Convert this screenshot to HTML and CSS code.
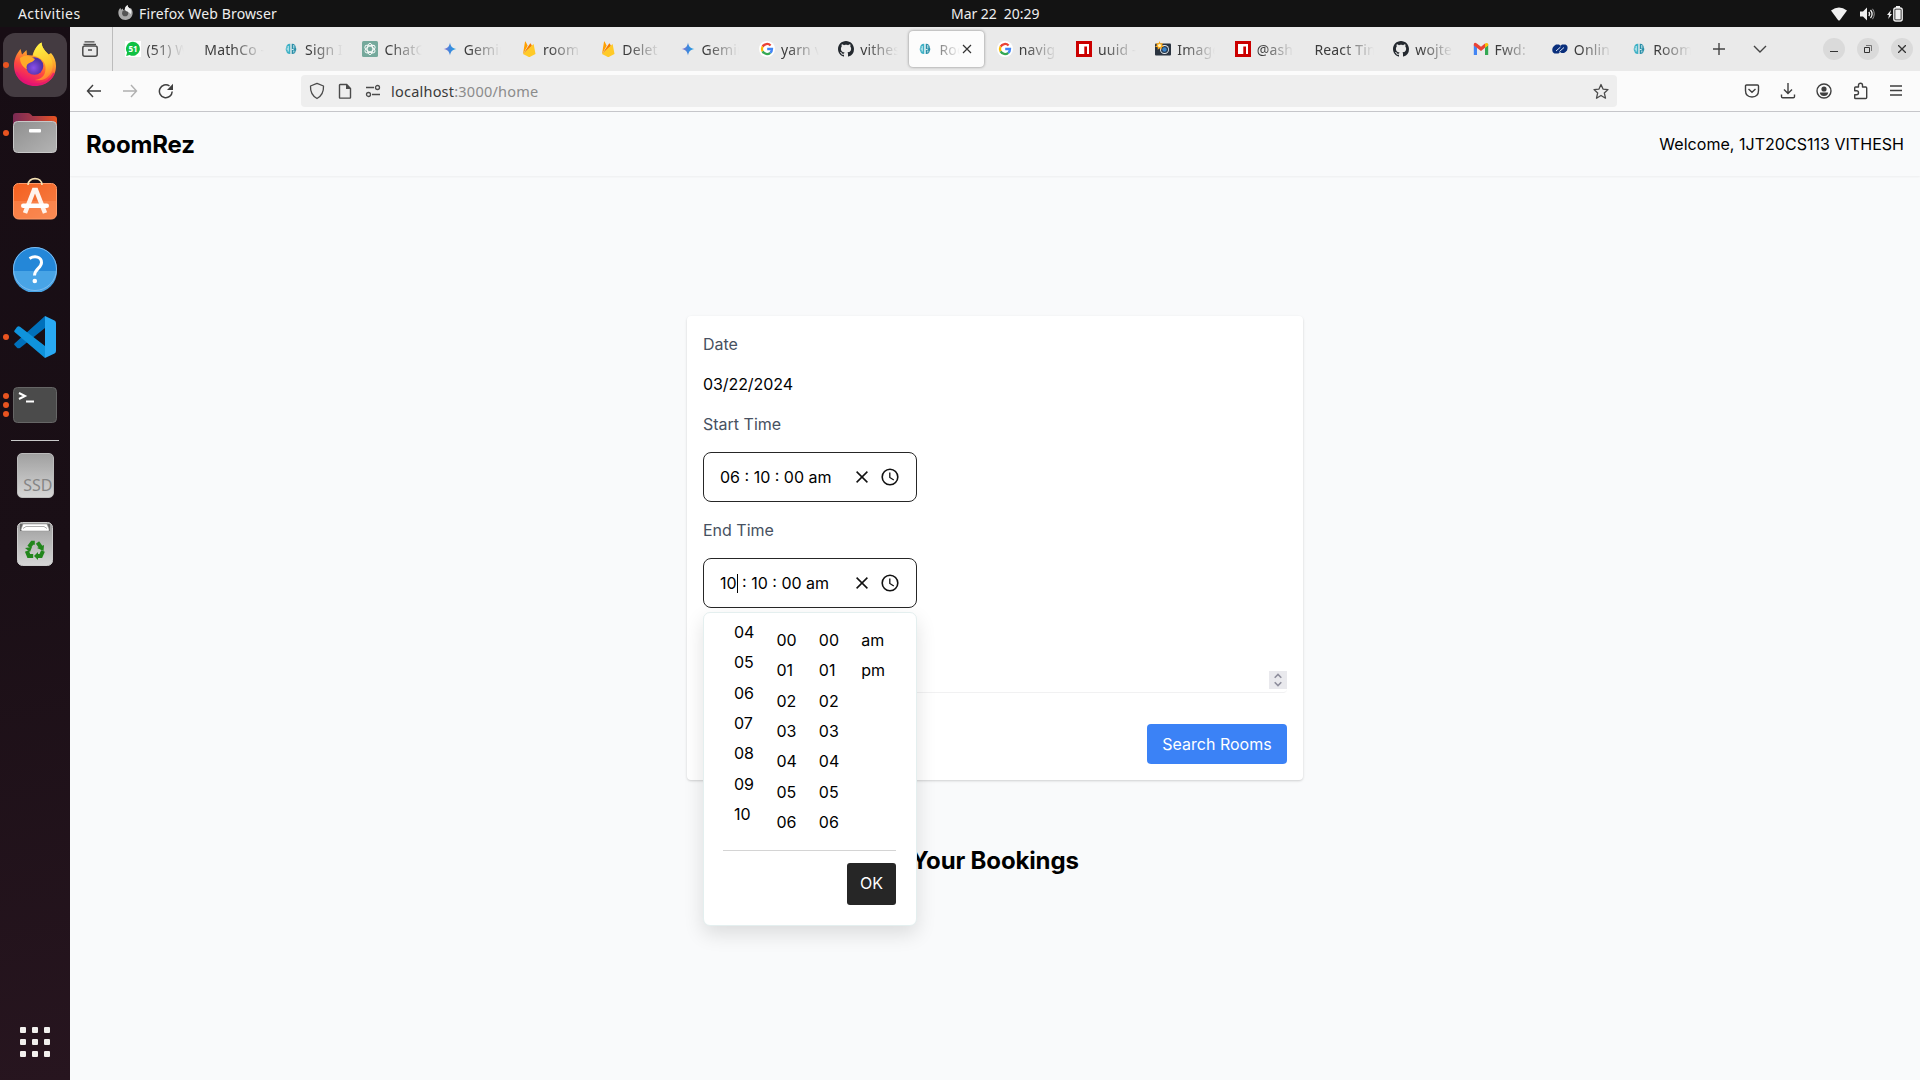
FILE: index.html
```html
<!DOCTYPE html>
<html lang="en">
<head>
<meta charset="utf-8">
<title>RoomRez</title>
<link rel="stylesheet" href="styles.css">
</head>
<body>
<svg class="defs" width="0" height="0">
  <defs>
    <linearGradient id="ffBody" x1=".8" y1="0" x2=".35" y2="1"><stop offset="0" stop-color="#fff24a"/><stop offset=".35" stop-color="#ffa72b"/><stop offset=".65" stop-color="#ff4a3e"/><stop offset="1" stop-color="#e3087c"/></linearGradient>
    <linearGradient id="ffTail" x1=".4" y1="0" x2=".6" y2="1"><stop offset="0" stop-color="#fff546"/><stop offset=".6" stop-color="#ffc42e"/><stop offset="1" stop-color="#ff7a30"/></linearGradient>
    <radialGradient id="ffGlobe" cx=".45" cy=".6"><stop offset="0" stop-color="#8a50ea"/><stop offset="1" stop-color="#5232a8"/></radialGradient>
    <linearGradient id="folderBack"><stop offset="0" stop-color="#7a2a53"/><stop offset=".5" stop-color="#a83a48"/><stop offset="1" stop-color="#e95420"/></linearGradient>
    <linearGradient id="greyDown" x1="0" y1="0" x2="0" y2="1"><stop offset="0" stop-color="#9e9e9e"/><stop offset="1" stop-color="#d6d6d6"/></linearGradient>
    <linearGradient id="folderFront" x1="0" y1="0" x2="1" y2="1"><stop offset="0" stop-color="#8f8f8f"/><stop offset="1" stop-color="#b4b4b4"/></linearGradient>
    <linearGradient id="gem"><stop offset="0" stop-color="#9b72cb"/><stop offset=".45" stop-color="#4285dc"/><stop offset="1" stop-color="#1ba1e3"/></linearGradient>
    <symbol id="gemini" viewBox="0 0 16 16"><path fill="url(#gem)" d="M8 1.500C8.600 5.500 10.500 7.400 14.500 8C10.500 8.600 8.600 10.500 8 14.500C7.400 10.500 5.500 8.600 1.500 8C5.500 7.400 7.400 5.500 8 1.500z"/></symbol>
    <symbol id="firebase" viewBox="0 0 16 16"><path fill="#ffa000" d="M2 13L4 .8c.1-.5.5-.5.7-.1l2 4z"/><path fill="#f57c00" d="M2 13L9 2.800c.3-.5.7-.5.9 0L11 5z"/><path fill="#ffca28" d="M2 13L12 3.500c.4-.3.700-.2.800.3L14.500 13l-5.300 2.800c-.6.300-1.200.300-1.800 0z"/></symbol>
    <symbol id="google" viewBox="0 0 16 16"><circle cx="8" cy="8" r="8" fill="#fff"/><g fill="none" stroke-width="2.300"><path stroke="#ea4335" d="M3.600 5.600A5 5 0 0 1 11.600 4.500"/><path stroke="#fbbc05" d="M3.600 5.600a5 5 0 0 0 0 4.800"/><path stroke="#34a853" d="M3.600 10.400A5 5 0 0 0 11.300 11.800"/><path stroke="#4285f4" d="M11.300 11.800A4.900 4.900 0 0 0 13 8H8.200"/></g></symbol>
    <symbol id="github" viewBox="0 0 16 16"><path fill="#24292f" d="M8 0C3.580 0 0 3.580 0 8c0 3.540 2.290 6.530 5.470 7.590.4.070.55-.17.55-.38 0-.19-.01-.82-.01-1.490-2.010.37-2.530-.49-2.690-.94-.09-.23-.48-.94-.82-1.130-.28-.15-.68-.52-.01-.53.63-.01 1.080.58 1.230.82.72 1.210 1.870.87 2.330.66.07-.52.28-.87.51-1.070-1.780-.2-3.640-.89-3.640-3.950 0-.87.31-1.590.82-2.150-.08-.2-.36-1.020.08-2.120 0 0 .67-.21 2.200.82.64-.18 1.320-.27 2-.27s1.360.09 2 .27c1.530-1.040 2.200-.82 2.200-.82.44 1.100.16 1.920.08 2.120.51.56.82 1.270.82 2.150 0 3.070-1.870 3.750-3.650 3.950.29.25.54.73.54 1.480 0 1.070-.01 1.930-.01 2.200 0 .21.15.46.55.38A8.010 8.010 0 0 0 16 8c0-4.420-3.580-8-8-8z"/></symbol>
    <symbol id="npm" viewBox="0 0 16 16"><path fill="#cb0000" d="M0 0h16v16H0z"/><path fill="#fff" d="M3 3h10v10h-2V5.500H8.300V13H3z"/></symbol>
    <symbol id="brain" viewBox="0 0 16 16"><path fill="#3fb1c5" d="M7.300 2.700C4.500 2.500 3 4.500 3.300 6.500c-.8 1-.8 2.500 0 3.500C3.500 12 5 13.300 7.300 13z"/><path fill="#2b8fa8" d="M8.700 2.700c2.800-.2 4.300 1.800 4 3.800.8 1 .8 2.500 0 3.500-.2 2-1.700 3.300-4 3z"/><path fill="none" stroke="#e2f5f8" stroke-width=".9" d="M5.200 5v5.500M3.500 8h1.700M10.800 4v3.500M10.800 9.500v2M8.700 8.500h2"/></symbol>
  </defs>
</svg>

<div class="topbar">
  <span class="activities">Activities</span>
  <svg class="app-icon" width="15" height="15" viewBox="0 0 44 44"><path fill="#aaa" d="M22 44C9 44 1 34 1 22c0-6 3-11 6-14l2 6 5-4 1 5 5-1c0-6 3-11 8-14 0 5 4 8 8 11l1-3c4 5 6 9 6 15 0 12-8 21-21 21z"/><circle cx="21" cy="24" r="9" fill="#555"/><path fill="#eee" d="M28 0c0 5 4 8 8 11 4 5 4 11 1 16-5-8-15-8-17-13 0-6 3-11 8-14z"/></svg>
  <span class="app-name">Firefox Web Browser</span>
  <span class="clock">Mar 22&nbsp; 20:29</span>
  <div class="status">
    <svg width="16" height="16" viewBox="0 0 16 16"><path fill="#f0f0f0" d="M0 4.500Q8-1.500 16 4.500L9 14q-1 1-2 0z"/></svg>
    <svg width="16" height="16" viewBox="0 0 16 16"><path fill="#f0f0f0" d="M1 5.500h3L8 1.500v13l-4-4H1z"/><path fill="none" stroke="#f0f0f0" stroke-width="1.300" d="M9.800 6q1.600 2 0 4M11.500 4q3.200 4 0 8"/><path fill="none" stroke="#999" d="M13.500 2.800q3.500 5 0 10.400"/></svg>
    <svg width="16" height="16" viewBox="0 0 16 16"><path fill="#f0f0f0" d="M4 4L0 9h2l-.8 4L5 8H3z"/><rect x="6.800" y="2" width="8.400" height="13" rx="2" fill="none" stroke="#f0f0f0" stroke-width="1.400"/><path fill="#f0f0f0" d="M9 0h4v2H9zM8.300 3.500h5.400v10H8.300z"/></svg>
  </div>
</div>

<div class="desktop">
  <aside class="dock">
    <div class="tile active"><span class="dots"><i></i></span>
      <svg width="44" height="46" viewBox="0 0 44 46"><path fill="url(#ffBody)" d="M22 45C9.500 45 1 35.500 1 24.500c0-7 3-12 6.500-16.500l1.500 5.500 4.500-4.500.500 5 5.500.500C21 9 24 4 28.500 1.500 29 7 32 10 35.500 13.500L38 12c3.500 4 5 8 5 13 0 11.500-9 20-21 20z"/><path fill="url(#ffTail)" d="M28.500 1.500C29 7 32 9.500 35.500 13.500c5 6 6 14 1 20.500-4 5-10 6-14.500 5 8-1 11-6 10.500-13-.500-6-5-9.500-12.500-11.500C21.500 8.500 24 4 28.500 1.500z"/><circle cx="21.500" cy="25" r="8.800" fill="url(#ffGlobe)"/><path fill="#ffab28" d="M7 17c5-3.500 9-2 12-.500l3 1.500c-1 2.500-4 3-6.500 4.500-2 1-2.500 4-1.500 6-5-3-7-7-7-11.500z"/><path fill="none" stroke="#e01770" stroke-width="2" opacity=".75" d="M3 31c4 8 11 12.500 19.500 12.500S38 39 41 32"/></svg>
    </div>
    <div class="tile"><span class="dots"><i></i></span>
      <svg width="46" height="42" viewBox="0 0 46 42"><path fill="url(#folderBack)" d="M1 12V4q0-3 3-3h12q2 0 3 1.500L20.500 4H42q3 0 3 3v8H1z"/><rect x="1.500" y="9.500" width="43" height="31" rx="4" fill="url(#folderFront)" stroke="#c8c8c8"/><rect x="17" y="17" width="12" height="3.500" rx="1" fill="#fff"/></svg>
    </div>
    <div class="tile store">
      <svg width="46" height="46" viewBox="0 0 46 46"><defs><linearGradient id="bag" x1="0" y1="0" x2="1" y2="1"><stop offset="0" stop-color="#f5601f"/><stop offset="1" stop-color="#f58048"/></linearGradient></defs><rect x="1.500" y="8.500" width="43" height="35.500" rx="5" fill="url(#bag)" stroke="#ff9a68"/><path fill="#ff9a66" opacity=".4" d="M2 26h42v14q0 4-4 4H6q-4 0-4-4z"/><path fill="none" stroke="#f6e2b4" stroke-width="1.700" d="M16 10c0-8.500 14-8.500 14 0"/><path fill="none" stroke="#fff3ec" stroke-width="4.500" d="M13 38L22 15h2l9 23"/><rect x="9" y="28.500" width="28" height="4.500" rx="2.200" fill="#fff"/></svg>
    </div>
    <div class="tile help">
      <svg width="46" height="46" viewBox="0 0 46 46"><circle cx="23" cy="23" r="22" fill="#2487d8"/><path fill="#48a4e6" d="M1 25h44a22 22 0 0 1-44 0z"/><circle cx="23" cy="23" r="21.500" fill="none" stroke="#7dbcf0"/><path fill="none" stroke="#fff" stroke-width="3" d="M17.500 12.500c5-3 12-2 12 4 0 5.500-7 6.500-7 13"/><circle cx="22.800" cy="35" r="2.300" fill="#fff"/></svg>
    </div>
    <div class="tile"><span class="dots"><i></i></span>
      <svg width="44" height="44" viewBox="0 0 44 44"><path fill="#0070bb" d="M1.500 28.500L32 1v12L7 33q-2 .800-3-.300L1.500 30q-.800-.800 0-1.500z"/><path fill="#0f93dc" d="M1.500 15.500L4 12q1.500-1.400 3-.300L32 31v12L1.500 17q-.700-.800 0-1.500z"/><path fill="#29a9f3" d="M32 1l9.500 4.500q1.500.700 1.500 2.500v28q0 1.800-1.500 2.500L32 43z"/></svg>
    </div>
    <div class="tile"><span class="dots"><i></i><i></i><i></i></span>
      <svg width="46" height="38" viewBox="0 0 46 38"><rect x="1.500" y="1.500" width="43" height="35" rx="4" fill="#4b4b4b" stroke="#666"/><path fill="none" stroke="#fff" stroke-width="2" d="M7 7l6 3-6 3M14 15.500h8"/></svg>
    </div>
    <div class="sep"></div>
    <div class="tile"><div class="ssd">SSD</div></div>
    <div class="tile">
      <svg width="38" height="46" viewBox="0 0 38 46"><rect x="1.500" y="1.500" width="35" height="43" rx="5" fill="url(#greyDown)" stroke="#ccc"/><path fill="#666" d="M4 3h30v7H4z"/><path fill="#fff" stroke="#999" stroke-width=".600" d="M5 8.500L7 3h24l2 5v2H6z"/><path stroke="#888" stroke-width=".700" fill="none" d="M7 7.500l3-2h18l3 2"/><g fill="none" stroke="#22861c" stroke-width="4"><path d="M13 26l3.200-4.300h2.600"/><path d="M21.500 21.500l3.700 5.200"/><path d="M27 30l-2.200 5h-4.300"/><path d="M17.200 35h-4.400l-2-5"/></g><path fill="#22861c" d="M22 31v8l-4-4zM9 27l7-1-2 5zM21 27l7-3-.500 6z"/></svg>
    </div>
    <div class="apps"><i></i><i></i><i></i><i></i><i></i><i></i><i></i><i></i><i></i></div>
  </aside>

  <section class="browser">
    <div class="tabs">
      <div class="recent"><svg width="18" height="18" viewBox="0 0 18 18" fill="none" stroke="#4b4b4b" stroke-width="1.500"><path d="M3.500 1.800h10M2.500 4.300h12.500" stroke-width="1.200"/><rect x="1.800" y="6" width="14.400" height="10.200" rx="2"/><path d="M7 10h4"/></svg></div>
      <div class="tab"><svg width="16" height="16" viewBox="0 0 16 16"><path fill="#fff" d="M0 0h16v16H0z"/><path fill="#0fc143" d="M8 .8a7 7 0 1 1-3.400 13.200L1.200 15l.9-3.400A7 7 0 0 1 8 .8z"/><text x="8" y="11" font-size="8" font-weight="700" text-anchor="middle" fill="#fff">51</text></svg><span>(51) W</span></div>
      <div class="tab"><span>MathCo -</span></div>
      <div class="tab"><svg width="16" height="16"><use href="#brain"/></svg><span>Sign I</span></div>
      <div class="tab"><svg width="16" height="16" viewBox="0 0 16 16"><rect width="16" height="16" rx="1.500" fill="#75a99c"/><g fill="none" stroke="#fff" stroke-width=".9"><ellipse cx="8" cy="8" rx="2.800" ry="5.600"/><ellipse cx="8" cy="8" rx="2.800" ry="5.600" transform="rotate(60 8 8)"/><ellipse cx="8" cy="8" rx="2.800" ry="5.600" transform="rotate(120 8 8)"/></g></svg><span>ChatG</span></div>
      <div class="tab"><svg width="16" height="16"><use href="#gemini"/></svg><span>Gemin</span></div>
      <div class="tab"><svg width="16" height="16"><use href="#firebase"/></svg><span>room</span></div>
      <div class="tab"><svg width="16" height="16"><use href="#firebase"/></svg><span>Delet</span></div>
      <div class="tab"><svg width="16" height="16"><use href="#gemini"/></svg><span>Gemin</span></div>
      <div class="tab"><svg width="16" height="16"><use href="#google"/></svg><span>yarn v</span></div>
      <div class="tab"><svg width="16" height="16"><use href="#github"/></svg><span>vithes</span></div>
      <div class="tab current"><svg width="16" height="16"><use href="#brain"/></svg><span>Roo</span><svg class="close" width="10" height="10" viewBox="0 0 10 10"><path stroke="#333" stroke-width="1.200" d="M1 1l8 8M9 1L1 9"/></svg></div>
      <div class="tab"><svg width="16" height="16"><use href="#google"/></svg><span>navig</span></div>
      <div class="tab"><svg width="16" height="16"><use href="#npm"/></svg><span>uuid -</span></div>
      <div class="tab"><svg width="16" height="16" viewBox="0 0 16 16"><rect y="2.500" width="16" height="12" rx="1" fill="#2b3440"/><circle cx="9.500" cy="8.500" r="4.500" fill="#e8edf0"/><circle cx="9.500" cy="8.500" r="3.600" fill="#263a50"/><circle cx="9.500" cy="8.500" r="2.200" fill="#3a83c8"/><path fill="#ffae20" d="M4.500 0l1 2.600L8 2 7 4.200l2 1.600-2.500.500.200 2.500-2-1.500-2 1.500V6.300L0 5.800l2-1.600L1 2l2.500.600z"/><circle cx="4.500" cy="4.500" r="1.600" fill="#fff3bd"/></svg><span>Image</span></div>
      <div class="tab"><svg width="16" height="16"><use href="#npm"/></svg><span>@ash</span></div>
      <div class="tab"><span>React Tim</span></div>
      <div class="tab"><svg width="16" height="16"><use href="#github"/></svg><span>wojte</span></div>
      <div class="tab"><svg width="16" height="16" viewBox="0 0 16 16"><path fill="#4285f4" d="M.8 4v10H4V6.500z"/><path fill="#34a853" d="M15.200 4v10H12V6.500z"/><path fill="#ea4335" d="M.8 3q.8-2 3-.5L8 5.800l4-3.200V6.800L8 10 .8 4.500z"/><path fill="#fbbc04" d="M12 2.600q2.500-1.700 3.200.700v1.200L12 6.800z"/></svg><span>Fwd:</span></div>
      <div class="tab"><svg width="16" height="16" viewBox="0 0 16 16"><path fill="#0a2f7c" d="M4 3.500h3l1.500 1.200L10 3.500h3.500Q16 4.500 15.500 7.500q0 2-2 3.500l-1.500 1H9.500L8 11l-1.500 1.500h-4Q0 11.500.3 8q.2-1.500 1.700-3z"/><path stroke="#dfe6f5" stroke-width="1" d="M4 10l4.500-4M7.500 10.500L12 6.500"/></svg><span>Onlin</span></div>
      <div class="tab"><svg width="16" height="16"><use href="#brain"/></svg><span>Room</span></div>
      <svg class="plus" width="12" height="12" viewBox="0 0 12 12"><path stroke="#444" stroke-width="1.400" d="M6 0v12M0 6h12"/></svg>
      <svg class="alltabs" width="14" height="8" viewBox="0 0 14 8"><path fill="none" stroke="#444" stroke-width="1.400" d="M1 1l6 6 6-6"/></svg>
      <div class="winbtns">
        <b><svg width="8" height="8" viewBox="0 0 8 8"><path stroke="#333" d="M0 6.500h8"/></svg></b>
        <b><svg width="8" height="8" viewBox="0 0 8 8" fill="none" stroke="#333"><path d="M.5 2.500h5v5h-5z"/><path stroke="#777" d="M2 .5h5.500V6"/></svg></b>
        <b><svg width="8" height="8" viewBox="0 0 8 8"><path stroke="#333" stroke-width="1.300" d="M0 0l8 8M8 0L0 8"/></svg></b>
      </div>
    </div>

    <div class="nav">
      <div class="nav-left">
        <svg width="16" height="16" viewBox="0 0 16 16" fill="none" stroke="#3f3f3f" stroke-width="1.400"><path d="M15 8H1.500M7 2L1.500 8 7 14"/></svg>
        <svg width="16" height="16" viewBox="0 0 16 16" fill="none" stroke="#b0b0b0" stroke-width="1.400"><path d="M1 8h13.500M9 2l5.500 6L9 14"/></svg>
        <svg width="16" height="16" viewBox="0 0 16 16"><path fill="none" stroke="#3f3f3f" stroke-width="1.500" d="M14.200 8.500A6.400 6.400 0 1 1 11.500 3"/><path fill="#3f3f3f" d="M15 .8V7H9z"/></svg>
      </div>
      <div class="url">
        <svg width="16" height="18" viewBox="0 0 16 18" fill="none" stroke="#4b4b4b" stroke-width="1.300"><path d="M8 1.300L14.500 4c.3 6-2 10-6.500 12.500C3.500 14 1.200 10 1.500 4z" stroke-linejoin="round"/></svg>
        <svg width="16" height="16" viewBox="0 0 16 16"><path fill="none" stroke="#4b4b4b" stroke-width="1.400" d="M3.700 1.500h6L13.500 5.500v9q0 .6-.6.600H3.100q-.6 0-.6-.6V2.100q0-.6.600-.6z"/><path fill="#4b4b4b" d="M9 1v5h5z"/></svg>
        <svg width="16" height="14" viewBox="0 0 16 14" fill="none" stroke="#4b4b4b" stroke-width="1.300"><path d="M1 3.500h8M7 10.500h8"/><circle cx="12.500" cy="3.500" r="2"/><circle cx="3.500" cy="10.500" r="2"/></svg>
        <span class="addr">localhost<em>:3000/home</em></span>
        <svg class="star" width="16" height="17" viewBox="0 0 16 16" fill="none" stroke="#4b4b4b" stroke-width="1.300" stroke-linejoin="round"><path d="M8 1l2 4.600 5 .5-3.700 3.300 1.200 5.300L8 12l-4.500 2.700 1.200-5.300L1 6.100l5-.5z"/></svg>
      </div>
      <div class="tools">
        <svg width="16" height="16" viewBox="0 0 16 16" fill="none" stroke="#3f3f3f" stroke-width="1.400"><path d="M2.500 2h11q1 0 1 1v4.500q0 6.500-6.500 6.500T1.500 7.500V3q0-1 1-1zM4.500 6L8 9.300 11.500 6"/></svg>
        <svg width="16" height="16" viewBox="0 0 16 16" fill="none" stroke="#3f3f3f" stroke-width="1.400"><path d="M8 0v10.500M4 6.500l4 4 4-4M1.500 11.500v2q0 1.200 1.200 1.200h10.600q1.200 0 1.200-1.200v-2"/></svg>
        <svg width="16" height="16" viewBox="0 0 16 16"><circle cx="8" cy="8" r="7" fill="none" stroke="#3f3f3f" stroke-width="1.400"/><circle cx="8" cy="6" r="2.600" fill="#3f3f3f"/><path fill="#3f3f3f" d="M3.800 9.500h8.400q-.5 3.500-4.200 3.500t-4.200-3.500z"/></svg>
        <svg width="16" height="18" viewBox="0 0 16 18" fill="none" stroke="#3f3f3f" stroke-width="1.400"><path d="M5.500 5V3.200a2 2 0 0 1 4 0V5h3.200q1 0 1 1v9.500q0 1-1 1H2.500q-.8 0-.8-.8v-3h1.800a2 2 0 0 0 0-4H1.700V5.800q0-.8.800-.8z" stroke-linejoin="round"/></svg>
        <svg width="14" height="16" viewBox="0 0 14 16" stroke="#3f3f3f" stroke-width="1.300"><path d="M1 3h12M1 7.500h12M1 12h12"/></svg>
      </div>
    </div>

    <div class="page">
      <header><h1>RoomRez</h1><span>Welcome, 1JT20CS113 VITHESH</span></header>
      <main>
        <form class="card">
          <label>Date</label>
          <div class="date">03/22/2024</div>
          <label>Start Time</label>
          <div class="time"><span>06 : 10 : 00 am</span>
            <svg width="12" height="12" viewBox="0 0 12 12"><path stroke="#111" stroke-width="1.500" d="M.6.6l10.800 10.800M11.400.6L.6 11.400"/></svg>
            <svg width="18" height="18" viewBox="0 0 18 18" fill="none" stroke="#111"><circle cx="9" cy="9" r="7.800" stroke-width="1.600"/><path stroke-width="1.300" d="M8.800 4.500V9.500l4 2.500"/></svg>
          </div>
          <label>End Time</label>
          <div class="time"><span>10<i class="caret"></i> : 10 : 00 am</span>
            <svg width="12" height="12" viewBox="0 0 12 12"><path stroke="#111" stroke-width="1.500" d="M.6.6l10.800 10.800M11.400.6L.6 11.400"/></svg>
            <svg width="18" height="18" viewBox="0 0 18 18" fill="none" stroke="#111"><circle cx="9" cy="9" r="7.800" stroke-width="1.600"/><path stroke-width="1.300" d="M8.800 4.500V9.500l4 2.500"/></svg>
            <div class="picker">
              <div class="cols">
                <ul class="hours"><li>04</li><li>05</li><li>06</li><li>07</li><li>08</li><li>09</li><li>10</li></ul>
                <ul><li>00</li><li>01</li><li>02</li><li>03</li><li>04</li><li>05</li><li>06</li></ul>
                <ul><li>00</li><li>01</li><li>02</li><li>03</li><li>04</li><li>05</li><li>06</li></ul>
                <ul><li>am</li><li>pm</li></ul>
              </div>
              <div class="foot"><button type="button" class="ok">OK</button></div>
            </div>
          </div>
          <div class="capacity"><span class="spin"><svg width="8" height="14" viewBox="0 0 8 14" fill="none" stroke="#8f8f9d" stroke-width="1.600"><path d="M.7 4.800L4 1.500l3.300 3.300M.7 9.200L4 12.500l3.300-3.300"/></svg></span></div>
          <button type="button" class="search">Search Rooms</button>
        </form>
        <h2>Your Bookings</h2>
      </main>
    </div>
  </section>
</div>
</body>
</html>
```
FILE: styles.css
```css
* { box-sizing: border-box; margin: 0; padding: 0; }
body { width: 1920px; height: 1080px; overflow: hidden; font-family: "Noto Sans", sans-serif; font-size: 14px; display: flex; flex-direction: column; }
svg { display: block; flex: none; }
i, em { font-style: normal; }
.defs { position: absolute; }

/* system bar */
.topbar { height: 27px; flex: none; background: #131313; color: #eee; display: grid; grid-template-columns: 118px 21px 812px 1fr auto; align-items: center; }
.topbar span { white-space: nowrap; }
.activities { padding-left: 18px; letter-spacing: .42px; }
.app-name { letter-spacing: .13px; }
.app-icon { margin-top: -2px; }
.clock { margin-top: -1px; letter-spacing: -.05px; }
.status { display: flex; gap: 12px; padding-right: 17px; }

.desktop { flex: 1; display: flex; min-height: 0; }

/* dock */
.dock { width: 70px; flex: none; display: flex; flex-direction: column; align-items: center; padding-top: 4px; background: linear-gradient(170deg, #170d14 0%, #1a0f16 50%, #27151f 100%); }
.tile { width: 70px; height: 68px; flex: none; display: grid; grid-template-columns: 70px; place-items: center; }
.tile > * { grid-area: 1 / 1; }
.tile.active::before { content: ""; grid-area: 1 / 1; width: 64px; height: 64px; border-radius: 12px; background: #443b41; }
.tile.active > svg { margin-bottom: 2px; }
.store > svg { margin-bottom: 7px; }
.help > svg { margin-bottom: 1px; }
.dots { justify-self: start; margin-left: 3px; display: flex; flex-direction: column; gap: 3px; z-index: 1; }
.dots i { width: 6px; height: 6px; border-radius: 3px; background: #e95420; }
.sep { width: 48px; height: 1px; margin: 1px 0; flex: none; background: #c8c8c8; }
.ssd { width: 37px; height: 45px; border-radius: 5px; border: 1px solid #bbb; background: linear-gradient(#a0a0a0, #d6d6d6); color: #858585; font-size: 16px; line-height: 20px; padding-top: 21px; text-align: right; margin-bottom: 1px; }
.apps { margin-top: auto; margin-bottom: 23px; display: grid; grid-template-columns: repeat(3, 6px); gap: 6px; }
.apps i { height: 6px; border-radius: 1px; background: #f2f0ee; }

/* browser chrome */
.browser { flex: 1; min-width: 0; display: flex; flex-direction: column; }
.tabs { height: 44px; flex: none; background: #eaeaea; display: flex; align-items: center; color: #3c3c3c; }
.recent { width: 43px; height: 44px; border-right: 1px solid #bcbcbc; display: flex; align-items: center; padding-left: 11px; margin-right: 4px; }
.tab { width: 79.300px; flex: none; height: 36px; padding: 0 12px 0 8px; display: flex; align-items: center; gap: 6px; }
.tab span { flex: 1; min-width: 0; overflow: hidden; white-space: nowrap; padding-top: 1px; font-size: 14px; letter-spacing: .15px; -webkit-mask-image: linear-gradient(to left, transparent, #000 32px); mask-image: linear-gradient(to left, transparent, #000 32px); }
.tab > svg:first-child { margin-left: -.500px; }
.tab.current { width: 75.300px; margin: 0 5px 0 -1px; padding-left: 9px; background: #fcfcfc; border-radius: 4px; box-shadow: 0 0 3px rgba(0,0,0,.45); }
.tab .close { margin-left: -4px; }
.plus { margin-left: 10px; }
.alltabs { margin-left: 28px; }
.winbtns { margin-left: auto; display: flex; gap: 12px; padding-right: 7px; }
.winbtns b { width: 22px; height: 22px; border-radius: 11px; background: #dadada; display: grid; place-items: center; }

.nav { height: 41px; flex: none; background: #fbfbfb; border-bottom: 1px solid #c6c6ca; display: flex; align-items: center; }
.nav-left { width: 231px; display: flex; gap: 20px; padding-left: 16px; }
.url { width: 1316px; height: 32px; border-radius: 4px; background: #eeeeee; display: flex; align-items: center; padding: 0 8px; gap: 12px; }
.addr { color: #3a3a3a; font-size: 14.500px; margin-left: -2px; letter-spacing: .22px; }
.addr em { color: #8b8b8b; }
.star { margin-left: auto; }
.tools { flex: 1; display: flex; justify-content: flex-end; align-items: center; gap: 20.300px; padding-right: 17px; }

/* application */
.page { flex: 1; background: #f9fafb; font-family: Inter, sans-serif; font-size: 16px; line-height: 24px; color: #000; display: flex; flex-direction: column; }
header { height: 64px; flex: none; display: flex; justify-content: space-between; align-items: center; padding: 0 16px; box-shadow: 0 1px 2px rgba(0,0,0,.05); }
header span { letter-spacing: .03px; }
h1, h2 { font-size: 24px; line-height: 32px; font-weight: 700; letter-spacing: -.15px; }
h1 { padding-top: 1px; }
main { display: flex; flex-direction: column; align-items: center; padding-top: 140px; }
.card { width: 616px; height: 464px; background: #fff; border-radius: 4px; padding: 16px; display: flex; flex-direction: column; box-shadow: 0 1px 3px rgba(0,0,0,.1), 0 1px 2px rgba(0,0,0,.08); }
label { color: #475161; }
.date { padding: 16px 0; letter-spacing: -.08px; }
.time { position: relative; width: 214px; height: 50px; margin: 16px 0; border: 1px solid #262626; border-radius: 8px; display: flex; align-items: center; padding: 0 17px 0 16px; flex: none; }
.time span { flex: 1; white-space: nowrap; }
.time > svg + svg { margin-left: 13px; }
.caret { display: inline-block; width: 1px; height: 19px; vertical-align: -4px; background: #000; }
.picker { position: absolute; z-index: 2; left: -1px; top: 53px; width: 214px; height: 314px; background: #fff; border: 1px solid #e4efef; border-radius: 7px; box-shadow: 0 8px 20px rgba(0,0,0,.12); padding: 3px 20px 3px 19px; }
.cols { display: grid; grid-template-columns: repeat(4, 42.400px); height: 235px; border-bottom: 1px solid #d4d4d4; padding-top: 9px; }
ul { list-style: none; padding-left: 11px; line-height: 30.330px; }
.hours { margin-top: -8px; }
.foot { display: flex; justify-content: flex-end; padding-top: 12px; }
button { border: 0; font: inherit; color: #fff; border-radius: 4px; }
.ok { width: 49px; height: 42px; padding-bottom: 2px; background: #262626; border-radius: 3px; }
.capacity { height: 69px; margin-bottom: 31px; border-bottom: 1px solid #f1f1f2; border-radius: 4px; display: flex; justify-content: flex-end; align-items: flex-end; padding-bottom: 3px; flex: none; }
.spin { width: 18px; height: 18px; background: #e9e9ed; display: grid; place-items: center; }
.search { align-self: flex-end; width: 140px; height: 40px; background: #3b82f6; flex: none; }
h2 { margin-top: 65px; }
```
